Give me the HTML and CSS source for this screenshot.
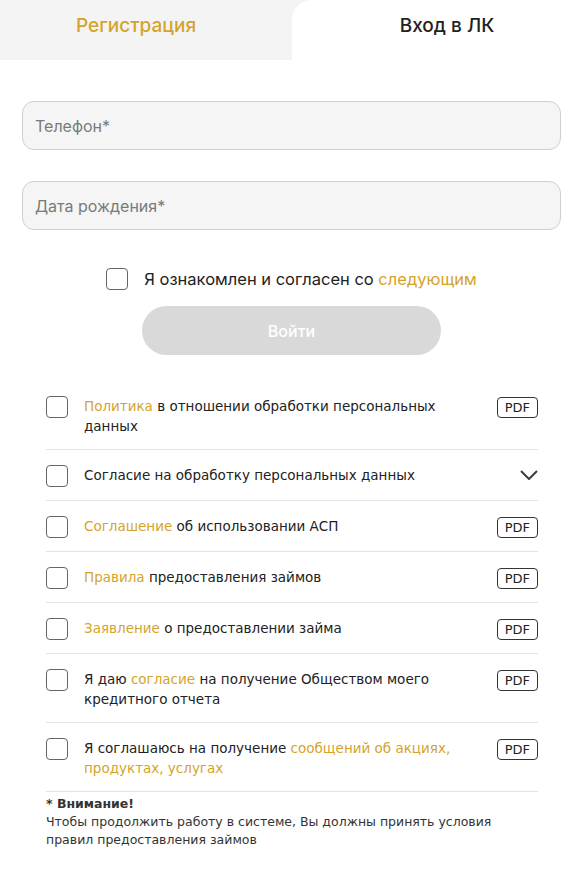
FILE: index.html
```html
<!DOCTYPE html>
<html lang="ru">
<head>
    <meta charset="UTF-8">
    <meta name="viewport" content="width=device-width, initial-scale=1.0">
    <title>Вход в ЛК</title>
    <link rel="stylesheet" href="styles.css">
</head>
<body>
    <div class="tabs">
        <div class="tab">Регистрация</div>
        <div class="tab active">Вход в ЛК</div>
    </div>

    <div class="form">
        <div class="field">Телефон*</div>
        <div class="field">Дата рождения*</div>

        <div class="agree">
            <span class="box"></span>
            <span>Я ознакомлен и согласен со <span class="link">следующим</span></span>
        </div>

        <button class="submit">Войти</button>
    </div>

    <div class="docs">
        <div class="doc">
            <span class="box"></span>
            <p><span class="link">Политика</span> в отношении обработки персональных данных</p>
            <span class="pdf">PDF</span>
        </div>
        <div class="doc">
            <span class="box"></span>
            <p>Согласие на обработку персональных данных</p>
            <svg class="chevron" width="18" height="10" viewBox="0 0 18 10">
                <path d="M1 1 L9 9 L17 1" fill="none" stroke="#3a3d45" stroke-width="2"/>
            </svg>
        </div>
        <div class="doc">
            <span class="box"></span>
            <p><span class="link">Соглашение</span> об использовании АСП</p>
            <span class="pdf">PDF</span>
        </div>
        <div class="doc">
            <span class="box"></span>
            <p><span class="link">Правила</span> предоставления займов</p>
            <span class="pdf">PDF</span>
        </div>
        <div class="doc">
            <span class="box"></span>
            <p><span class="link">Заявление</span> о предоставлении займа</p>
            <span class="pdf">PDF</span>
        </div>
        <div class="doc">
            <span class="box"></span>
            <p>Я даю <span class="link">согласие</span> на получение Обществом моего кредитного отчета</p>
            <span class="pdf">PDF</span>
        </div>
        <div class="doc">
            <span class="box"></span>
            <p>Я соглашаюсь на получение <span class="link">сообщений об акциях, продуктах, услугах</span></p>
            <span class="pdf">PDF</span>
        </div>

        <div class="note">
            <b>* Внимание!</b><br>
            Чтобы продолжить работу в системе, Вы должны принять условия правил предоставления займов
        </div>
    </div>
</body>
</html>
```

FILE: styles.css
```css
body {
    margin: 0;
    font-family: "DejaVu Sans", sans-serif;
    color: #222;
    background-color: white;
}

.link {
    color: #d4a42a;
}

/* tabs */
.tabs {
    display: grid;
    grid-template-columns: 292px 1fr;
    height: 60px;
    background-color: #f4f4f4;
}

.tab {
    display: flex;
    align-items: center;
    justify-content: center;
    padding-bottom: 10px;
    padding-right: 20px;
    font-family: Inter, sans-serif;
    font-size: 19px;
    font-weight: 500;
    color: #d4a42a;
}

.tab.active {
    padding-right: 0;
    padding-left: 15px;
    background-color: white;
    border-top-left-radius: 20px;
    color: #222;
}

/* form */
.form {
    display: flex;
    flex-direction: column;
    align-items: center;
    padding: 41px 26px 0 22px;
    font-family: Inter, sans-serif;
}

.field {
    box-sizing: border-box;
    width: 100%;
    height: 49px;
    margin-bottom: 31px;
    padding: 0 12px;
    display: flex;
    align-items: center;
    background-color: #f5f5f5;
    border: 1px solid #cfcfcf;
    border-radius: 12px;
    font-size: 16px;
    color: #7a7a7a;
}

.agree {
    display: flex;
    align-items: center;
    gap: 16px;
    margin-top: 7px;
    font-size: 16.5px;
    color: #222;
}

.submit {
    width: 299px;
    height: 49px;
    margin-top: 16px;
    border: none;
    border-radius: 25px;
    background-color: #d9d9d9;
    color: white;
    font-family: Inter, sans-serif;
    font-size: 16px;
    font-weight: 500;
}

.box {
    box-sizing: border-box;
    flex: none;
    width: 22px;
    height: 22px;
    border: 1px solid #666;
    border-radius: 4px;
}

/* documents list */
.docs {
    margin-top: 26px;
    padding: 0 49px 0 46px;
    font-size: 13.5px;
}

.doc {
    display: flex;
    align-items: flex-start;
    gap: 16px;
    padding: 15px 0 13px;
    border-bottom: 1px solid #e3e3e3;
}

.doc p {
    flex: 1;
    margin: 0;
    max-width: 392px;
    line-height: 20px;
}

.pdf {
    margin-left: auto;
    margin-top: 1px;
    padding: 1px 7px;
    border: 1px solid #333;
    border-radius: 4px;
    font-size: 13px;
    line-height: 17px;
}

.chevron {
    margin-left: auto;
    margin-top: 5px;
}

.note {
    max-width: 470px;
    padding-top: 3px;
    font-size: 12.5px;
    line-height: 18px;
    color: #333;
}
```
